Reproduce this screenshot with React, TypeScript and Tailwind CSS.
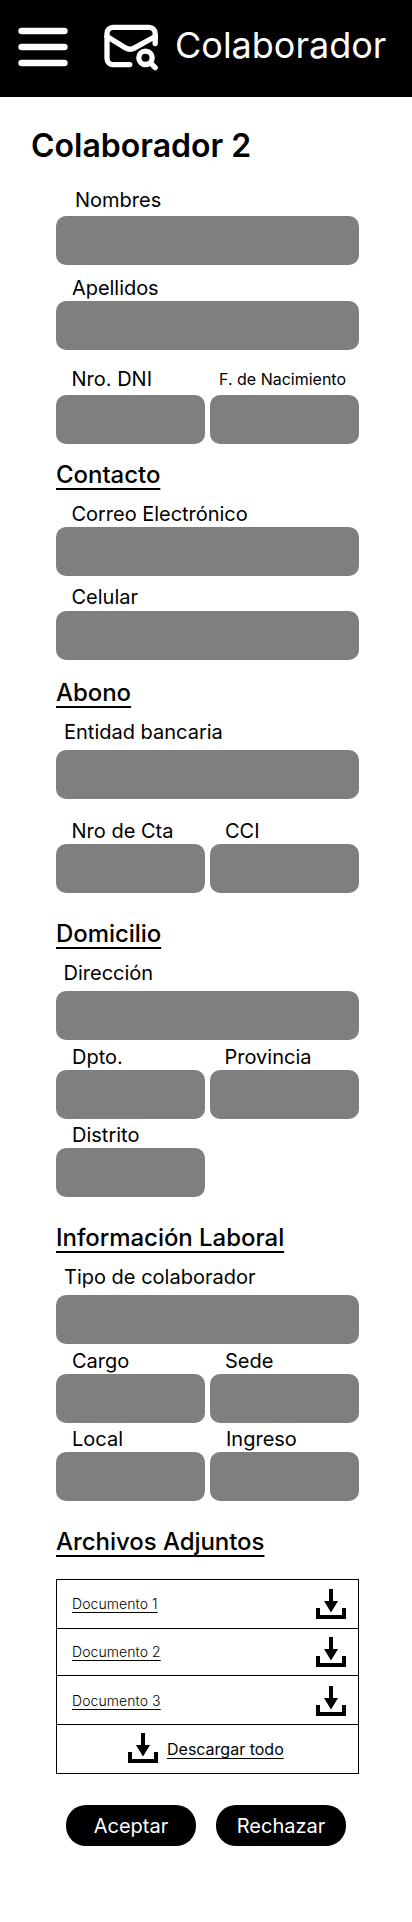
import type { ReactNode } from "react";

function MenuIcon() {
  return (
    <svg width="50" height="40" viewBox="0 0 50 40" fill="none" stroke="white" strokeWidth="6.6" strokeLinecap="round">
      <path d="M3.6 4H46.4M3.6 20H46.4M3.6 36H46.4" />
    </svg>
  );
}

function MailSearchIcon() {
  return (
    <svg width="54" height="48" viewBox="0 0 54 48" fill="none" stroke="white" strokeWidth="5.3" strokeLinecap="round" strokeLinejoin="round">
      <path d="M51.2 19.5V9.4a6 6 0 0 0-6-6H9a6 6 0 0 0-6 6v25.2a6 6 0 0 0 6 6h16.8" />
      <path d="M3 12.5l18.6 11.4a9 9 0 0 0 9 0L51.2 12.5" />
      <circle cx="41.5" cy="33.8" r="6.7" />
      <path d="M47 39.4l4.2 4.2" />
    </svg>
  );
}

function DownloadIcon() {
  return (
    <svg className="shrink-0" width="30" height="30" viewBox="0 0 30 30" fill="black">
      <path d="M13 0h4v12h5L15 23.5 8 12h5z" />
      <path d="M0 19h4v7h22v-7h4v11H0z" />
    </svg>
  );
}

function Label({ className, children }: { className: string; children: ReactNode }) {
  return <label className={`block whitespace-nowrap leading-6 ${className}`}>{children}</label>;
}

function Box() {
  return <div className="h-[49px] rounded-[10px] bg-[#7f7f7f]" />;
}

function Field({ label, className, labelClass }: { label: string; className: string; labelClass: string }) {
  return (
    <div className={`flex flex-col ${className}`}>
      <Label className={labelClass}>{label}</Label>
      <Box />
    </div>
  );
}

function Row({ className, children }: { className: string; children: ReactNode }) {
  return <div className={`grid grid-cols-2 gap-[5px] ${className}`}>{children}</div>;
}

function Section({ className, children }: { className: string; children: ReactNode }) {
  return (
    <h2 className={`h-[29px] text-2xl leading-[29px] font-medium tracking-[-0.05px] underline decoration-[1.5px] underline-offset-[5px] ${className}`}>
      {children}
    </h2>
  );
}

function DocumentRow({ name, className }: { name: string; className: string }) {
  return (
    <div className={`flex items-start justify-between border-b border-black pr-3 pl-[15px] ${className}`}>
      <a className="mt-[6px] text-sm leading-[17px] font-light tracking-[0.08px] underline decoration-1 underline-offset-[3px]">{name}</a>
      <DownloadIcon />
    </div>
  );
}

export default function App() {
  return (
    <div className="min-h-[1922px] w-[412px] bg-white font-['Inter',sans-serif] text-xl text-black">
      <header className="flex h-[97px] items-start bg-black pl-[18px] text-white">
        <button className="mt-[27px]"><MenuIcon /></button>
        <div className="mt-6 ml-9"><MailSearchIcon /></div>
        <span className="mt-[23px] ml-[17px] text-4xl leading-[44px]">Colaborador</span>
      </header>

      <h1 className="mt-[29px] ml-[31px] h-[39px] text-[32px] leading-[39px] font-semibold">Colaborador 2</h1>

      <main className="ml-14 w-[303px]">
        <Field className="mt-[23px]" label="Nombres" labelClass="mb-1 pl-[19px]" />
        <Field className="mt-[11px]" label="Apellidos" labelClass="mb-px pl-4 tracking-[-0.05px]" />
        <Row className="mt-[17px]">
          <Field className="" label="Nro. DNI" labelClass="mb-1 pl-[15.5px]" />
          <Field className="" label="F. de Nacimiento" labelClass="mb-1 pl-[9px] text-base leading-6" />
        </Row>

        <Section className="mt-4">Contacto</Section>
        <Field className="mt-[13px]" label="Correo Electrónico" labelClass="mb-px pl-[15.5px] tracking-[-0.03px]" />
        <Field className="mt-[9px]" label="Celular" labelClass="mb-[2px] pl-[15.5px]" />

        <Section className="mt-[18px]">Abono</Section>
        <Field className="mt-[13px]" label="Entidad bancaria" labelClass="mb-[6px] pl-2" />
        <Row className="mt-5">
          <Field className="" label="Nro de Cta" labelClass="mb-px pl-[15.5px]" />
          <Field className="" label="CCI" labelClass="mb-px pl-[15px]" />
        </Row>

        <Section className="mt-[26px]">Domicilio</Section>
        <Field className="mt-[13px]" label="Dirección" labelClass="mb-[6px] pl-[7.5px]" />
        <Row className="mt-[5px]">
          <Field className="" label="Dpto." labelClass="mb-px pl-4" />
          <Field className="" label="Provincia" labelClass="mb-px pl-[14.5px]" />
        </Row>
        <Row className="mt-1">
          <Field className="" label="Distrito" labelClass="mb-px pl-4" />
        </Row>

        <Section className="mt-[26px]">Información Laboral</Section>
        <Field className="mt-[13px]" label="Tipo de colaborador" labelClass="mb-[6px] pl-2" />
        <Row className="mt-[5px]">
          <Field className="" label="Cargo" labelClass="mb-px pl-4" />
          <Field className="" label="Sede" labelClass="mb-px pl-[15px]" />
        </Row>
        <Row className="mt-1">
          <Field className="" label="Local" labelClass="mb-px pl-4" />
          <Field className="" label="Ingreso" labelClass="mb-px pl-4" />
        </Row>

        <Section className="mt-[26px]">Archivos Adjuntos</Section>
        <div className="mt-[23px] border border-black">
          <DocumentRow name="Documento 1" className="h-[49px] pt-[9px]" />
          <DocumentRow name="Documento 2" className="h-[47px] pt-2" />
          <DocumentRow name="Documento 3" className="h-[49px] pt-[10px]" />
          <div className="flex h-12 items-start pt-2 pl-[71px]">
            <DownloadIcon />
            <a className="mt-[7px] ml-[9px] text-base leading-[19px] underline decoration-1 underline-offset-[3px]">Descargar todo</a>
          </div>
        </div>

        <div className="mt-[31px] flex gap-5 pl-[10px] text-white">
          <button className="h-[41px] w-[130px] rounded-[20px] bg-black">Aceptar</button>
          <button className="h-[41px] w-[130px] rounded-[20px] bg-black">Rechazar</button>
        </div>
      </main>
    </div>
  );
}
